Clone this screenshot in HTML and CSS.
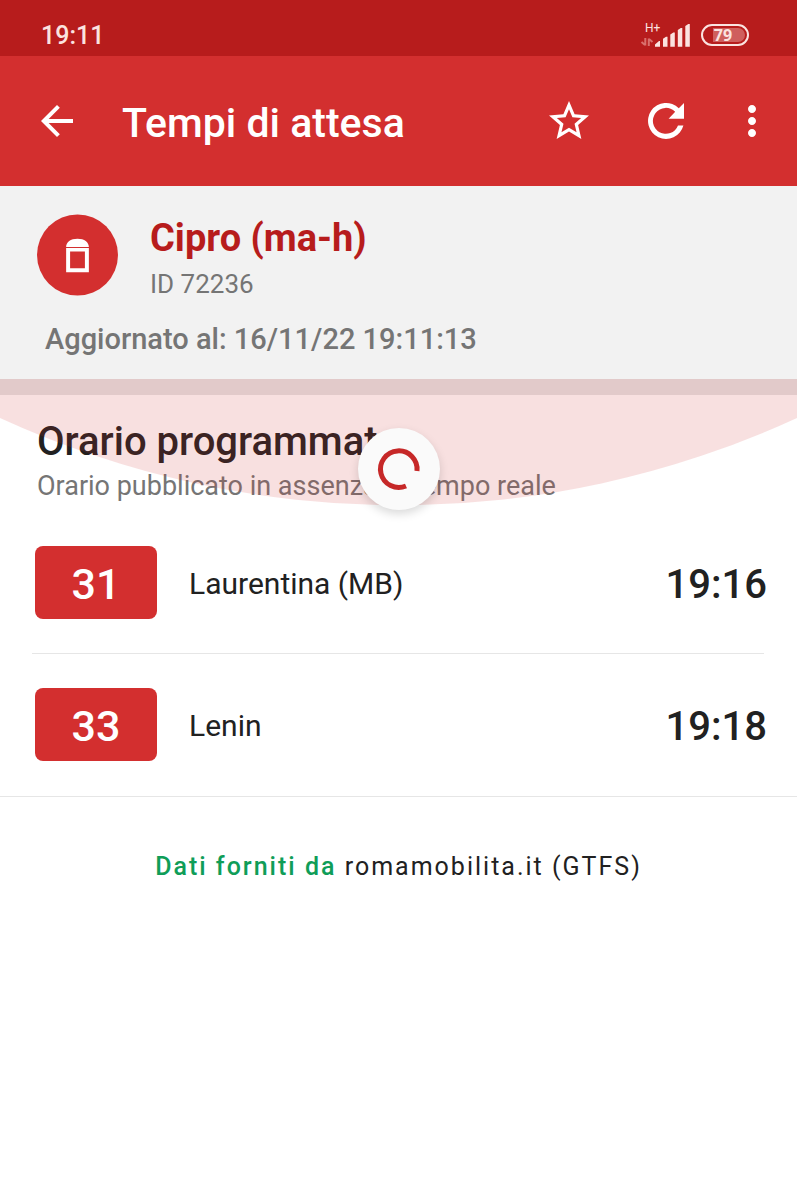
FILE: index.html
```html
<!DOCTYPE html>
<html lang="it">
<head>
    <meta charset="UTF-8">
    <meta name="viewport" content="width=device-width, initial-scale=1.0">
    <title>Tempi di attesa</title>
    <link rel="stylesheet" href="styles.css">
</head>
<body>
    <div class="status-bar">
        <span class="clock">19:11</span>
        <div class="status-icons">
            <svg class="signal" width="50" height="28" viewBox="0 0 50 28">
                <text class="signal-type" x="5" y="11">H+</text>
                <path class="data-arrows" d="M5.300 17v7.500M1.500 21l3.500 3M8.800 25v-7.500M12.500 21l-3.500-3"/>
                <g class="signal-bars">
                    <path d="M15 25.700v-2.200l4-3.500h1v5.700zM23 25.700v-8l3-2h1.500v10zM30.300 25.700V13.500l3-2h1.500v14.200zM37.800 25.700V9l3-2h1.500v18.700zM45.300 25.700V5l3-2h1.500v22.700z"/>
                </g>
            </svg>
            <span class="battery"><span class="battery-level"></span><span class="battery-text">79</span></span>
        </div>
    </div>

    <header class="toolbar">
        <button class="icon-btn" aria-label="Indietro">
            <svg width="48" height="48" viewBox="0 0 24 24"><path d="M20 11H7.830l5.590-5.590L12 4l-8 8 8 8 1.410-1.410L7.830 13H20v-2z"/></svg>
        </button>
        <h1>Tempi di attesa</h1>
        <button class="icon-btn" aria-label="Preferiti">
            <svg width="48" height="48" viewBox="0 0 24 24"><path d="M22 9.240l-7.190-.620L12 2 9.190 8.630 2 9.240l5.460 4.730L5.820 21 12 17.270 18.180 21l-1.630-7.030L22 9.240zM12 15.400l-3.760 2.270 1-4.280-3.320-2.880 4.380-.380L12 6.100l1.710 4.040 4.380.380-3.320 2.880 1 4.280L12 15.400z"/></svg>
        </button>
        <button class="icon-btn" aria-label="Aggiorna">
            <svg width="48" height="48" viewBox="0 0 24 24"><path d="M18.400 5.600A9 9 0 1 0 20.700 14.300H18A6.500 6.500 0 1 1 16.600 7.400L13.300 10.900H21V3z"/></svg>
        </button>
        <button class="icon-btn icon-btn-narrow" aria-label="Altro">
            <svg width="48" height="48" viewBox="0 0 24 24"><path d="M12 8c1.100 0 2-.9 2-2s-.9-2-2-2-2 .9-2 2 .9 2 2 2zm0 2c-1.100 0-2 .9-2 2s.9 2 2 2 2-.9 2-2-.9-2-2-2zm0 6c-1.100 0-2 .9-2 2s.9 2 2 2 2-.9 2-2-.9-2-2-2z"/></svg>
        </button>
    </header>

    <section class="stop">
        <div class="stop-info">
            <svg class="stop-icon" width="81" height="82" viewBox="0 0 82 82">
                <circle cx="41" cy="41" r="41"/>
                <path class="stop-sign" d="M29.500 33C29.500 28 34 24.500 41 24.500S52.500 28 52.500 33zM29.500 34H52.500V58.500H29.500zM33.500 37.500V54.500H48.500V37.500z"/>
            </svg>
            <div>
                <h2 class="stop-name">Cipro (ma-h)</h2>
                <p class="stop-id">ID 72236</p>
            </div>
        </div>
        <p class="updated">Aggiornato al: 16/11/22 19:11:13</p>
    </section>

    <main>
        <div class="schedule-head">
            <h2>Orario programmato</h2>
            <p>Orario pubblicato in assenza di tempo reale</p>
        </div>

        <ul class="departures">
            <li class="departure">
                <span class="line">31</span>
                <span class="destination">Laurentina (MB)</span>
                <time>19:16</time>
            </li>
            <li class="departure">
                <span class="line">33</span>
                <span class="destination">Lenin</span>
                <time>19:18</time>
            </li>
        </ul>

        <!-- overscroll -->
        <svg class="glow" viewBox="0 0 797 126" preserveAspectRatio="none"><path d="M0 0H797V39A954 954 0 0 1 0 39z"/></svg>
        <div class="spinner">
            <svg width="82" height="82" viewBox="0 0 82 82"><path d="M59 43A18.300 18.300 0 1 0 48 58"/></svg>
        </div>
    </main>

    <footer>
        <p><strong>Dati forniti da</strong> romamobilita.it (GTFS)</p>
    </footer>
</body>
</html>
```
FILE: styles.css
```css
* {
    box-sizing: border-box;
}

body {
    font-family: Roboto, sans-serif;
    background-color: white;
    color: #212121;
    margin: 0;
}

h1, h2, p, ul {
    margin: 0;
    padding: 0;
}

/* Status bar */
.status-bar {
    background-color: #b71c1c;
    color: #fbe3e0;
    height: 56px;
    padding: 14px 48px 0 41px;
    display: flex;
    justify-content: space-between;
    align-items: center;
}

.clock {
    font-size: 25px;
    font-weight: 500;
}

.status-icons {
    display: flex;
    align-items: center;
    gap: 11px;
}

.signal-type {
    font-size: 12px;
    fill: #fbe3e0;
}

.signal-bars {
    fill: #fbe3e0;
}

.data-arrows {
    fill: none;
    stroke: #d9706d;
    stroke-width: 2;
}

.battery {
    position: relative;
    width: 48px;
    height: 22px;
    border: 2px solid #fbe3e0;
    border-radius: 11px;
    padding-right: 4px;
    display: flex;
    justify-content: center;
    align-items: center;
}

.battery-level {
    position: absolute;
    top: 2px;
    bottom: 2px;
    left: 10px;
    right: 2px;
    border-radius: 0 7px 7px 0;
    background-color: #cf5f5d;
}

.battery-text {
    position: relative;
    font-family: "Noto Sans", sans-serif;
    font-size: 16px;
    font-weight: 700;
    line-height: 18px;
}

/* Toolbar */
.toolbar {
    background-color: #d32f2f;
    color: white;
    height: 130px;
    padding: 0 8px;
    display: flex;
    align-items: center;
}

.toolbar h1 {
    flex: 1;
    padding: 4px 0 0 17px;
    font-size: 41px;
    font-weight: 500;
}

.icon-btn {
    width: 97px;
    height: 96px;
    padding: 0;
    border: none;
    background: none;
    display: flex;
    justify-content: center;
    align-items: center;
    cursor: pointer;
}

.icon-btn svg {
    fill: white;
}

.icon-btn-narrow {
    width: 75px;
}

/* Stop */
.stop {
    background-color: #f2f2f2;
    padding: 28px 37px 22px;
}

.stop-info {
    display: flex;
    gap: 32px;
}

.stop-icon {
    fill: #d32f2f;
}

.stop-icon .stop-sign {
    fill: white;
    fill-rule: evenodd;
}

.stop-name {
    color: #b71c1c;
    font-size: 38px;
    font-weight: 700;
    line-height: 48px;
}

.stop-id {
    color: #757575;
    font-size: 26px;
    line-height: 44px;
}

.updated {
    color: #757575;
    font-size: 29px;
    font-weight: 500;
    line-height: 36px;
    padding: 15px 8px 0;
}

/* Schedule */
main {
    position: relative;
    border-top: 16px solid #e6e6e6;
}

.schedule-head {
    padding: 21px 37px 7px;
}

.schedule-head h2 {
    font-size: 40px;
    font-weight: 500;
    line-height: 52px;
}

.schedule-head p {
    color: #757575;
    font-size: 27px;
    line-height: 36px;
}

.departures {
    list-style: none;
    border-bottom: 1px solid #e6e6e6;
}

.departure {
    min-height: 142px;
    padding: 0 30px 0 35px;
    display: flex;
    align-items: center;
    gap: 32px;
}

.departure + .departure {
    position: relative;
    min-height: 143px;
}

.departure + .departure::before {
    content: "";
    position: absolute;
    top: 0;
    left: 32px;
    right: 33px;
    border-top: 1px solid #e6e6e6;
}

.line {
    width: 122px;
    border-radius: 8px;
    background-color: #d32f2f;
    color: white;
    font-size: 43px;
    font-weight: 500;
    line-height: 73px;
    padding-top: 2px;
    height: 73px;
    text-align: center;
}

.destination {
    flex: 1;
    font-size: 30px;
    padding-top: 2px;
}

.departure time {
    font-size: 40px;
    font-weight: 500;
    padding-top: 4px;
}

.glow {
    position: absolute;
    top: -16px;
    left: 0;
    width: 100%;
    height: 126px;
    fill: #d32f2f;
    fill-opacity: 0.15;
}

.spinner {
    position: absolute;
    top: 33px;
    left: 50%;
    width: 82px;
    height: 82px;
    margin-left: -41px;
    border-radius: 50%;
    background-color: #fafafa;
    box-shadow: 0 4px 10px rgba(0, 0, 0, 0.15);
}

.spinner path {
    fill: none;
    stroke: #c62828;
    stroke-width: 5;
}

/* Footer */
footer {
    padding: 53px 16px;
    font-size: 25px;
    line-height: 34px;
    letter-spacing: 2px;
    text-align: center;
}

footer strong {
    color: #0f9d58;
    font-weight: 500;
}
```
